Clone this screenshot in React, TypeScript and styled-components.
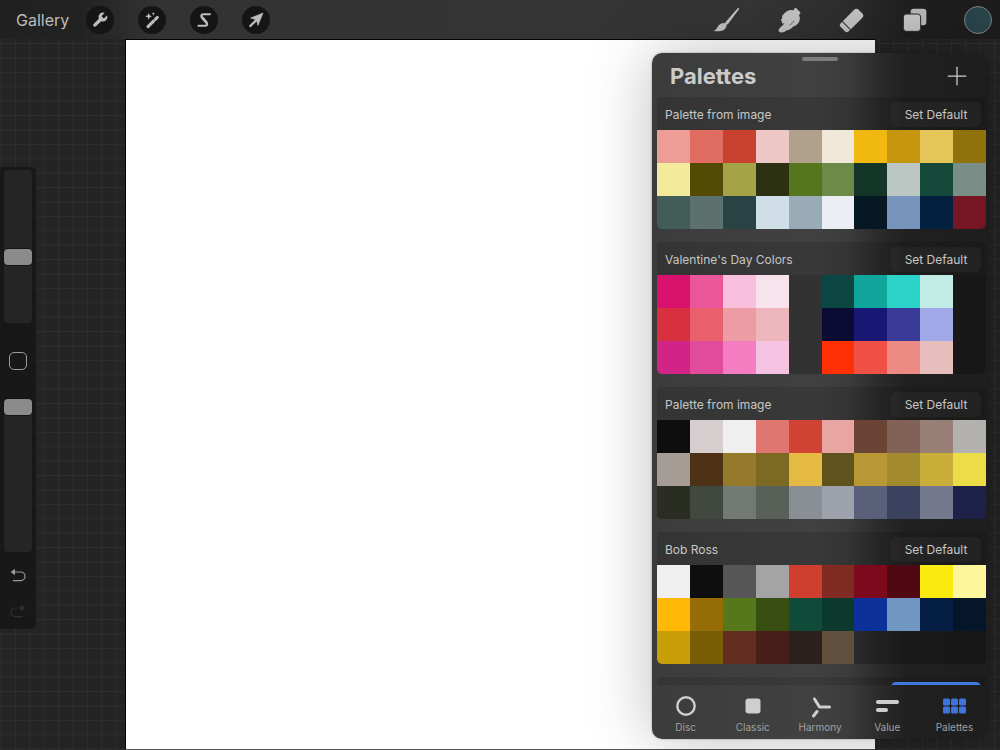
import React, { useState } from "react";
import styled, { createGlobalStyle } from "styled-components";
import { Plus } from "lucide-react";

const GlobalStyle = createGlobalStyle`
  *, *::before, *::after { box-sizing: border-box; }
  body { margin: 0; background: #242424; }
  button { border: 0; padding: 0; background: none; color: inherit; font: inherit; cursor: pointer; }
`;

const Screen = styled.div`
  position: relative;
  display: flex;
  flex-direction: column;
  min-height: 100vh;
  overflow: hidden;
  color: #c6c6c6;
  font-family: Inter, "Liberation Sans", sans-serif;
  background-color: #242424;
`;

const TopBar = styled.header`
  position: relative;
  display: flex;
  align-items: center;
  justify-content: space-between;
  height: 39px;
  padding: 0 8px 0 16px;
  background: linear-gradient(to right, #202020 0%, #222222 8%, #333333 16%, #353535 75%, #2e2e2e 84%, #1f1f1f 91%, #1c1c1c 100%);
`;

const BarSide = styled.div`
  display: flex;
  align-items: center;
  gap: 18px;
`;

const ToolGroup = styled.nav<{ $gap: number }>`
  display: flex;
  align-items: center;
  gap: ${(p) => p.$gap}px;
`;

const GalleryLink = styled.a`
  width: 52px;
  color: #bdbdbd;
  font-size: 16px;
  line-height: 20px;
  text-decoration: none;
  white-space: nowrap;
`;

const RoundTool = styled.button`
  display: grid;
  place-items: center;
  width: 28px;
  height: 28px;
  border-radius: 50%;
  background: #151515;
`;

const PlainTool = styled.button`
  display: grid;
  place-items: center;
  width: 28px;
  height: 28px;
`;

const ColorTool = styled.button`
  width: 28px;
  height: 28px;
  border: 1px solid #7d8485;
  border-radius: 50%;
  background: #2a444b;
`;

const Workspace = styled.main`
  position: relative;
  display: flex;
  flex: 1;
  justify-content: center;
`;

const GridLines = styled.svg`
  position: absolute;
  inset: 0;
  width: 100%;
  height: 100%;
`;

const Canvas = styled.section`
  position: relative;
  width: 75%;
  border: 1px solid #050505;
  border-right: 0;
  border-bottom-color: #555555;
  background: #ffffff;
`;

const SideBar = styled.aside`
  position: absolute;
  top: 128px;
  left: 0;
  display: flex;
  flex-direction: column;
  align-items: center;
  width: 36px;
  padding-top: 3px;
  border-radius: 0 5px 5px 0;
  background: #181818;
`;

const Slider = styled.input`
  appearance: none;
  width: 28px;
  height: 153px;
  margin: 0;
  border-radius: 4px;
  background: #252525;
  writing-mode: vertical-lr;
  direction: rtl;

  &::-webkit-slider-thumb {
    appearance: none;
    width: 28px;
    height: 16px;
    border-radius: 4px;
    background: #8b8b8b;
    box-shadow: 0 0 0 1px #151515;
  }
`;

const ModifyButton = styled.button`
  width: 18px;
  height: 18px;
  margin: 29px 0;
  border: 1px solid #9c9c9c;
  border-radius: 5px;
`;

const HistoryButton = styled.button<{ $dim?: boolean }>`
  display: grid;
  place-items: center;
  width: 28px;
  height: 36px;
  color: ${(p) => (p.$dim ? "#313131" : "#9a9a9a")};
`;

const History = styled.div`
  display: flex;
  flex-direction: column;
  padding-top: 5px;
`;

const Panel = styled.section`
  position: absolute;
  top: 53px;
  right: 12px;
  bottom: 11px;
  display: flex;
  flex-direction: column;
  width: 336px;
  overflow: hidden;
  border-radius: 10px;
  background: linear-gradient(to right, #3c3c3c 0%, #414141 48%, #3c3c3c 58%, #2a2a2a 68%, #202020 76%, #1e1e1e 100%);
`;

const PanelShadow = styled.div`
  position: absolute;
  top: 53px;
  right: 12px;
  bottom: 11px;
  width: 336px;
  border-radius: 10px;
  box-shadow: 0 0 64px rgba(0, 0, 0, 0.26), 0 0 2px rgba(0, 0, 0, 0.4);
`;

const PanelHeader = styled.header`
  position: relative;
  display: flex;
  align-items: center;
  justify-content: space-between;
  height: 44px;
  padding: 2px 16px 0 18px;
`;

const Handle = styled.span`
  position: absolute;
  top: 4px;
  left: 50%;
  width: 36px;
  height: 4px;
  border-radius: 2px;
  background: #7d7d7d;
  transform: translateX(-50%);
`;

const Title = styled.h1`
  margin: 0;
  color: #cbcbcb;
  font-size: 22px;
  font-weight: 700;
  line-height: 28px;
`;

const AddButton = styled.button`
  display: grid;
  place-items: center;
  width: 30px;
  height: 30px;
  color: #d0d0d0;
`;

const PaletteList = styled.div`
  display: flex;
  flex: 1;
  flex-direction: column;
  gap: 13px;
  min-height: 0;
  padding: 0 2px 0 5px;
  overflow: hidden;
`;

const PaletteCard = styled.article`
  flex: none;
`;

const PaletteHeader = styled.header`
  display: flex;
  align-items: center;
  justify-content: space-between;
  height: 33px;
  padding: 2px 5px 0 8px;
  border-radius: 4px 4px 0 0;
  background: rgba(0, 0, 0, 0.12);
`;

const PaletteName = styled.h2`
  margin: 0;
  color: #c6c6c6;
  font-size: 12px;
  font-weight: 400;
  line-height: 16px;
`;

const DefaultButton = styled.button<{ $active?: boolean }>`
  width: 90px;
  height: 25px;
  border-radius: 5px;
  color: #c6c6c6;
  font-size: 12px;
  line-height: 16px;
  background: ${(p) => (p.$active ? "#3f78e0" : "rgba(255, 255, 255, 0.035)")};
`;

const Swatches = styled.div`
  display: grid;
  grid-template-columns: repeat(10, 1fr);
  grid-auto-rows: 33px;
  overflow: hidden;
  border-radius: 0 0 5px 5px;
  background: rgba(0, 0, 0, 0.22);
`;

const Swatch = styled.button<{ $color: string }>`
  background: ${(p) => p.$color};
`;

const EmptySlot = styled.span``;

const TabBar = styled.nav`
  display: flex;
  height: 54px;
`;

const Tab = styled.button<{ $active: boolean }>`
  display: flex;
  flex: 1;
  flex-direction: column;
  align-items: center;
  gap: 2px;
  padding-top: 9px;
  color: ${(p) => (p.$active ? "#3f74dc" : "#cecece")};
`;

const TabLabel = styled.span`
  color: #a0a0a0;
  font-size: 10px;
  line-height: 14px;
`;

const WrenchIcon = () => (
  <svg width="18" height="18" viewBox="0 0 24 24" fill="#bdbdbd">
    <path d="M14.6 6.2a1.2 1.2 0 0 0 0 1.5l1.7 1.7a1.2 1.2 0 0 0 1.5 0l3.7-3.6a6 6 0 0 1-7.9 7.7l-7 6.9a2.2 2.2 0 0 1-3.1-3.1l6.9-7a6 6 0 0 1 7.9-7.8z" />
  </svg>
);

const WandIcon = () => (
  <svg width="28" height="28" viewBox="0 0 84 84" fill="#bdbdbd">
    <path d="M30 62 46 46" stroke="#bdbdbd" strokeWidth="9" strokeLinecap="round" />
    <path d="M52 40 58 34" stroke="#bdbdbd" strokeWidth="9" strokeLinecap="round" />
    <path d="M44 48 48 44" stroke="#bdbdbd" strokeWidth="9" />
    <path d="m32 21 3 7 7 3-7 3-3 7-3-7-7-3 7-3z" />
    <path d="m46 18 1.500 4 4 1.500-4 1.500-1.500 4-1.500-4-4-1.500 4-1.500z" />
  </svg>
);

const SelectIcon = () => (
  <svg width="28" height="28" viewBox="0 0 84 84" fill="none" stroke="#bdbdbd" strokeLinecap="round" strokeLinejoin="round">
    <path d="M60 25H41c-8 0-9 4-5 9l13 15c5 6 3 10-4 10H25" strokeWidth="6" />
    <path d="m36 34 13 15" strokeWidth="8" />
  </svg>
);

const ArrowIcon = () => (
  <svg width="28" height="28" viewBox="0 0 84 84" fill="#bdbdbd" stroke="#bdbdbd" strokeLinejoin="round">
    <path d="M63 21 26 36 43 41 48 58z" strokeWidth="2" />
    <path d="M25 60 45 40" strokeWidth="7" strokeLinecap="round" />
  </svg>
);

const BrushIcon = () => (
  <svg width="28" height="28" viewBox="0 0 84 84" fill="#c2c2c2">
    <path d="M80 6c2 1 2 2 1 4L48 54c-2 3-5 3-7 1s-2-5 0-7L77 7z" />
    <path d="M37 51c4 1 6 4 7 8-2 9-10 15-18 16-7 1-14 1-21 0 6-2 8-5 11-11 4-8 11-13 21-13z" />
  </svg>
);

const SmudgeIcon = () => (
  <svg width="28" height="28" viewBox="0 0 84 84" fill="#c2c2c2">
    <path d="M59 7c1-2 3-2 5 0l11 11c2 2 2 3 0 5l-3 4c4 8 3 18-2 24-4 6-9 9-16 11-5 5-10 9-17 11-3 1-5 2-8 4-6 4-16 3-18-2-1-3 1-6 3-8l15-15c-3 1-7 1-8-1-2-2 0-4 1-5-4-1-5-4-3-7l3-3c-2-4 0-9 4-11 5-8 14-13 23-13 3 0 5 1 7 1z" />
    <path d="M56 45c-2 6-7 9-12 12" fill="none" stroke="#444444" strokeWidth="2" strokeLinecap="round" />
  </svg>
);

const EraserIcon = () => (
  <svg width="28" height="28" viewBox="0 0 84 84" fill="#c2c2c2">
    <g transform="rotate(-45 42 42)">
      <path d="M20 25h48c6 0 10 3 10 9v16c0 6-4 9-10 9H20z" />
      <path d="M17 25v34h-6c-5 0-8-3-8-7V32c0-4 3-7 8-7z" />
    </g>
  </svg>
);

const LayersIcon = () => (
  <svg width="28" height="28" viewBox="0 0 84 84">
    <rect x="29" y="8" width="47" height="50" rx="9" fill="#b8b8b8" />
    <rect x="7" y="24" width="52" height="52" rx="9" fill="#c4c4c4" stroke="#292929" strokeWidth="3" />
  </svg>
);

const UndoIcon = ({ flip }: { flip?: boolean }) => (
  <svg width="16" height="16" viewBox="0 0 48 48" fill="none" stroke="currentColor" strokeWidth="3.500">
    <g transform={flip ? "matrix(-1 0 0 1 48 0)" : undefined}>
      <path d="M8 15h24a13 13 0 0 1 0 26H10" strokeLinecap="round" />
      <path d="M2 15 15 5v20z" fill="currentColor" stroke="none" />
    </g>
  </svg>
);

const DiscIcon = () => (
  <svg width="24" height="24" viewBox="0 0 24 24" fill="none">
    <circle cx="12" cy="12" r="8.700" stroke="currentColor" strokeWidth="2.400" />
  </svg>
);

const ClassicIcon = () => (
  <svg width="24" height="24" viewBox="0 0 24 24" fill="currentColor">
    <rect x="4.500" y="4.500" width="15" height="15" rx="3" />
  </svg>
);

const HarmonyIcon = () => (
  <svg width="24" height="24" viewBox="0 0 24 24" fill="none" stroke="currentColor" strokeWidth="3" strokeLinecap="round" strokeLinejoin="round">
    <path d="M6.500 5l5 8h10" />
    <path d="M9 17.500 5.500 22" />
  </svg>
);

const ValueIcon = () => (
  <svg width="24" height="24" viewBox="0 0 24 24" fill="currentColor">
    <rect x="1" y="6" width="23" height="4" rx="2" />
    <rect x="1" y="14" width="12" height="4" rx="2" />
  </svg>
);

const PalettesIcon = () => (
  <svg width="24" height="24" viewBox="0 0 24 24" fill="currentColor">
    {[1, 9, 17].map((x) => (
      <React.Fragment key={x}>
        <rect x={x} y="4.500" width="7" height="7" rx="1.500" />
        <rect x={x} y="12.500" width="7" height="7" rx="1.500" />
      </React.Fragment>
    ))}
  </svg>
);

type Palette = { name: string; colors: (string | null)[] };

const palettes: Palette[] = [
  {
    name: "Palette from image",
    colors: [
      "#ee9c96", "#e06c62", "#c8402e", "#eec8c4", "#b1a08c", "#f0e8d8", "#f2b812", "#c6960e", "#e6c558", "#8f730a",
      "#f3ea9c", "#534a06", "#a4a348", "#2c3112", "#55761c", "#6e8a48", "#143629", "#bcc6c2", "#15493a", "#7a8e88",
      "#425d57", "#5c706e", "#294244", "#d0dee8", "#99abb6", "#ebeff3", "#071825", "#7894bc", "#04203f", "#751622",
    ],
  },
  {
    name: "Valentine's Day Colors",
    colors: [
      "#d8126c", "#ea5698", "#f8c0dc", "#f8e2ec", null, "#0c4642", "#10a69c", "#2cd3c8", "#c2ece6", null,
      "#d8303e", "#e9606c", "#ee9ca4", "#ecb6bc", null, "#0a0c34", "#181874", "#3a3a98", "#a0a8e8", null,
      "#d22486", "#e24a9c", "#f47cc0", "#f6c2e2", null, "#ff3004", "#f05046", "#ec8a84", "#e8bebc", null,
    ],
  },
  {
    name: "Palette from image",
    colors: [
      "#0e0e0e", "#d6cece", "#efefef", "#e07670", "#d04234", "#e8a6a2", "#6c4436", "#826256", "#988076", "#b3b1ad",
      "#a69c96", "#4e3216", "#947a2a", "#7c6a22", "#e4ba42", "#60521c", "#b89834", "#a48a2e", "#c9ae3a", "#ecdd48",
      "#2a2e22", "#404840", "#727a73", "#586058", "#8a8f96", "#9da2ad", "#5a607a", "#3b4260", "#73788c", "#1e2148",
    ],
  },
  {
    name: "Bob Ross",
    colors: [
      "#efefef", "#0e0e0e", "#565656", "#a4a4a4", "#d03e30", "#802a22", "#7c0a1c", "#500812", "#fbea10", "#fdf69c",
      "#ffb806", "#966c06", "#54781a", "#384e12", "#104a38", "#0d382c", "#0c329a", "#7096c2", "#041e44", "#05162a",
      "#c89e06", "#785f06", "#642c20", "#462018", "#2c201c", "#62503e", null, null, null, null,
    ],
  },
];

const tabs = [
  { label: "Disc", Icon: DiscIcon },
  { label: "Classic", Icon: ClassicIcon },
  { label: "Harmony", Icon: HarmonyIcon },
  { label: "Value", Icon: ValueIcon },
  { label: "Palettes", Icon: PalettesIcon },
];

export default function App() {
  const [tab, setTab] = useState("Palettes");

  return (
    <Screen>
      <GlobalStyle />
      <TopBar>
        <BarSide>
          <GalleryLink href="#gallery">Gallery</GalleryLink>
          <ToolGroup $gap={24}>
            <RoundTool aria-label="Actions"><WrenchIcon /></RoundTool>
            <RoundTool aria-label="Adjustments"><WandIcon /></RoundTool>
            <RoundTool aria-label="Selection"><SelectIcon /></RoundTool>
            <RoundTool aria-label="Transform"><ArrowIcon /></RoundTool>
          </ToolGroup>
        </BarSide>
        <ToolGroup $gap={35}>
          <PlainTool aria-label="Paint"><BrushIcon /></PlainTool>
          <PlainTool aria-label="Smudge"><SmudgeIcon /></PlainTool>
          <PlainTool aria-label="Erase"><EraserIcon /></PlainTool>
          <PlainTool aria-label="Layers"><LayersIcon /></PlainTool>
          <ColorTool aria-label="Color" />
        </ToolGroup>
      </TopBar>

      <Workspace>
        <GridLines aria-hidden="true">
          <defs>
            <pattern id="grid" width="14.4" height="14.4" patternUnits="userSpaceOnUse" x="0.500" y="4">
              <path d="M.5 0V14.4M0 .5H14.4" stroke="#2e2e2e" strokeWidth="1" />
            </pattern>
          </defs>
          <rect width="100%" height="100%" fill="url(#grid)" />
        </GridLines>
        <Canvas aria-label="Canvas" />
        <SideBar>
          <Slider type="range" aria-label="Brush size" min={0} max={100} defaultValue={42} />
          <ModifyButton aria-label="Modify" />
          <Slider type="range" aria-label="Brush opacity" min={0} max={100} defaultValue={100} />
          <History>
            <HistoryButton aria-label="Undo"><UndoIcon /></HistoryButton>
            <HistoryButton aria-label="Redo" $dim><UndoIcon flip /></HistoryButton>
          </History>
        </SideBar>
      </Workspace>

      <PanelShadow />
      <Panel>
        <PanelHeader>
          <Handle />
          <Title>Palettes</Title>
          <AddButton aria-label="Add palette"><Plus size={30} strokeWidth={1} /></AddButton>
        </PanelHeader>
        <PaletteList>
          {palettes.map((palette, i) => (
            <PaletteCard key={i}>
              <PaletteHeader>
                <PaletteName>{palette.name}</PaletteName>
                <DefaultButton>Set Default</DefaultButton>
              </PaletteHeader>
              <Swatches>
                {palette.colors.map((color, j) =>
                  color ? <Swatch key={j} $color={color} aria-label={color} /> : <EmptySlot key={j} />
                )}
              </Swatches>
            </PaletteCard>
          ))}
          <PaletteCard>
            <PaletteHeader>
              <span />
              <DefaultButton $active aria-label="Default palette" />
            </PaletteHeader>
          </PaletteCard>
        </PaletteList>
        <TabBar>
          {tabs.map(({ label, Icon }) => (
            <Tab key={label} $active={tab === label} onClick={() => setTab(label)}>
              <Icon />
              <TabLabel>{label}</TabLabel>
            </Tab>
          ))}
        </TabBar>
      </Panel>
    </Screen>
  );
}
